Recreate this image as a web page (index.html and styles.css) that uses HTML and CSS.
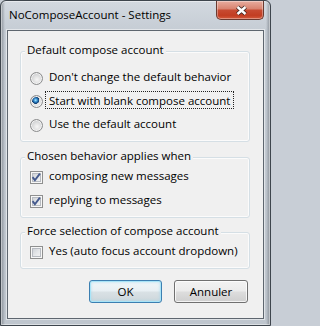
FILE: index.html
```html
<!DOCTYPE html>
<html>
<head>
<meta charset="utf-8">
<title>NoComposeAccount - Settings</title>
<link rel="stylesheet" href="styles.css">
</head>
<body>
<div class="window">
  <div class="titlebar">
    <span class="title">NoComposeAccount - Settings</span>
    <div class="close">
      <svg width="13" height="11" viewBox="0 0 13 11">
        <path d="M2.5 2 L10.5 9 M10.5 2 L2.5 9" stroke="#3a2420" stroke-width="4.2" fill="none"/>
        <path d="M2.5 2 L10.5 9 M10.5 2 L2.5 9" stroke="#ffffff" stroke-width="2.4" fill="none"/>
      </svg>
    </div>
  </div>
  <div class="client">
    <div class="group g1">
      <div class="legend">Default compose account</div>
      <div class="rows rows-radio">
        <div class="row"><span class="radio"></span><span class="lbl">Don't change the default behavior</span></div>
        <div class="row"><span class="radio on"></span><span class="lbl focus">Start with blank compose account</span></div>
        <div class="row"><span class="radio"></span><span class="lbl">Use the default account</span></div>
      </div>
    </div>
    <div class="group g2">
      <div class="legend">Chosen behavior applies when</div>
      <div class="rows">
        <div class="row"><span class="cb"><svg width="11" height="11" viewBox="0 0 11 11"><path d="M1.6 5.2 L3.9 8.2 L8.9 1.6" stroke="#44598d" stroke-width="1.9" fill="none"/></svg></span><span class="lbl">composing new messages</span></div>
        <div class="row"><span class="cb"><svg width="11" height="11" viewBox="0 0 11 11"><path d="M1.6 5.2 L3.9 8.2 L8.9 1.6" stroke="#44598d" stroke-width="1.9" fill="none"/></svg></span><span class="lbl">replying to messages</span></div>
      </div>
    </div>
    <div class="group g3">
      <div class="legend">Force selection of compose account</div>
      <div class="rows">
        <div class="row"><span class="cb"></span><span class="lbl">Yes (auto focus account dropdown)</span></div>
      </div>
    </div>
    <div class="buttons">
      <button class="btn default">OK</button>
      <button class="btn">Annuler</button>
    </div>
  </div>
</div>
</body>
</html>
```
FILE: styles.css
```css
html, body {
  margin: 0;
  padding: 0;
  background: #c8ced6;
}

.window {
  width: 271px;
  height: 326px;
  box-sizing: border-box;
  border: 1px solid #3e454d;
  border-radius: 6px 6px 0 0;
  padding: 0 6px 6px;
  display: flex;
  flex-direction: column;
  font-family: "Open Sans", "Noto Sans", sans-serif;
  font-size: 11.5px;
  line-height: 15px;
  color: #000;
  background:
    linear-gradient(to right, rgba(90,96,104,.55) 0, rgba(90,96,104,0) 4px, rgba(90,96,104,0) calc(100% - 4px), rgba(90,96,104,.55) 100%),
    linear-gradient(to bottom, #d3d9e0 0, #c6cdd5 28px, #bfc6ce 100%);
  box-shadow: inset 0 0 0 1px rgba(255,255,255,.45);
}

.titlebar {
  height: 28px;
  display: flex;
  align-items: flex-start;
}

.title {
  margin-top: 6px;
  margin-left: 2px;
  font-size: 11.5px;
  color: #000;
}

.close {
  margin-left: auto;
  width: 48px;
  height: 19px;
  box-sizing: border-box;
  border: 1px solid #6b3a30;
  border-top: none;
  border-radius: 0 0 5px 5px;
  background: linear-gradient(to bottom, #e8ad9f 0%, #d98471 42%, #c74a31 52%, #c23d22 80%, #d35a3c 100%);
  box-shadow: inset 0 0 0 1px rgba(255,255,255,.35);
  display: flex;
  align-items: center;
  justify-content: center;
}

.close svg {
  display: block;
  margin-left: 2px;
}

.client {
  flex: 1;
  margin-top: 1px;
  border: 1px solid #5e666f;
  background: #f0f0f0;
  box-shadow: 0 0 0 1px rgba(255,255,255,.5);
  display: flex;
  flex-direction: column;
  align-items: flex-start;
}

.group {
  margin-left: 12px;
  width: 230px;
  box-sizing: border-box;
  border: 1px solid #d5dfe5;
  border-radius: 3px;
  box-shadow: inset 0 0 0 1px #fbfbfb;
}

.g1 { margin-top: 20px; padding-bottom: 5px; }
.g2 { margin-top: 15px; padding-bottom: 5px; }
.g3 { margin-top: 14px; padding-bottom: 5px; }

.legend {
  margin-top: -10px;
  margin-left: 4px;
  width: fit-content;
  padding: 0 2px;
  background: #f0f0f0;
}

.rows-radio { margin-top: 8px; }
.g2 .rows, .g3 .rows { margin-top: 1px; }

.row {
  display: flex;
  align-items: center;
  height: 24px;
  padding-left: 9px;
}

.rows-radio .row { height: 23.5px; }

.lbl { margin-left: 6px; white-space: nowrap; }

.lbl.focus {
  margin-left: 2px;
  padding: 1px 3px 0;
  border: 1px dotted #222;
}

.radio {
  flex: none;
  margin-top: 3px;
  width: 13px;
  height: 13px;
  box-sizing: border-box;
  border-radius: 50%;
  border: 1px solid #8b8c8d;
  background: radial-gradient(circle at 55% 60%, #f6f6f6 0, #eaeaea 2px, #d6d7d8 5px, #c4c5c7 6px);
  box-shadow: inset 0 0 0 1px #f3f3f3;
}

.radio.on {
  background:
    radial-gradient(circle at 42% 38%, #b4ecfc 0, #4ea5df 1.3px, #1c609f 2.6px, #123f70 3.4px, rgba(18,63,112,0) 3.9px),
    radial-gradient(circle at 55% 60%, #f6f6f6 0, #eaeaea 2px, #d6d7d8 5px, #c4c5c7 6px);
}

.cb {
  flex: none;
  margin-top: 3px;
  width: 13px;
  height: 13px;
  box-sizing: border-box;
  border: 1px solid #8e8f8f;
  background: linear-gradient(135deg, #c6cad0 0, #e6e8ea 55%, #f7f7f7 100%);
  box-shadow: inset 0 0 0 1px #f7f7f7, inset 0 0 0 2px #b7bbc1;
}

.cb svg { display: block; }

.buttons {
  align-self: stretch;
  margin-top: 11px;
  padding-right: 15px;
  display: flex;
  justify-content: flex-end;
  gap: 12px;
}

.btn {
  width: 74px;
  height: 23px;
  box-sizing: border-box;
  padding: 0;
  border: 1px solid #707070;
  border-radius: 3px;
  font: inherit;
  color: #000;
  background: linear-gradient(to bottom, #f2f2f2 0%, #ebebeb 48%, #dddddd 52%, #cfcfcf 100%);
  box-shadow: inset 0 0 0 1px rgba(255,255,255,.75);
}

.btn.default {
  width: 73px;
  border-color: #3c7fb1;
  background: linear-gradient(to bottom, #f0f6f9 0%, #e8eff3 48%, #d9e1e5 52%, #cdd6db 100%);
  box-shadow: inset 0 0 0 1px #a9e4f7, inset 0 0 3px 1px rgba(150,215,240,.6);
}
```
